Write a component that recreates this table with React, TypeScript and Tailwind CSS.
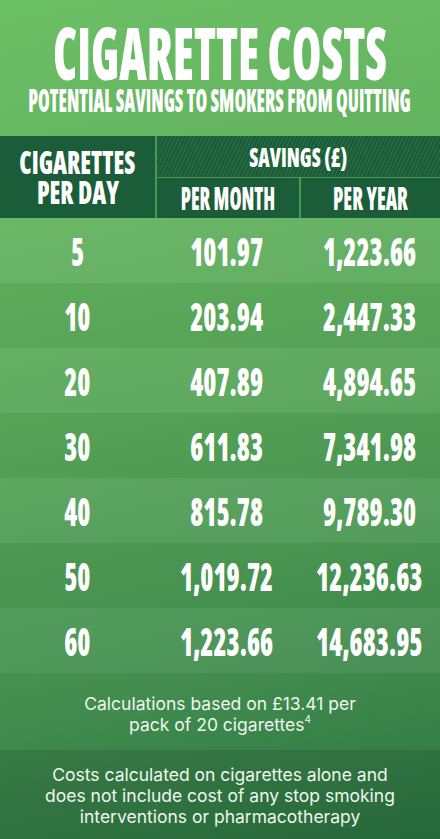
import React from "react";

const cond = "font-['Open_Sans',sans-serif] font-extrabold [font-stretch:75%] text-white whitespace-nowrap inline-block";

const rows = [
  ["5", "101.97", "1,223.66"],
  ["10", "203.94", "2,447.33"],
  ["20", "407.89", "4,894.65"],
  ["30", "611.83", "7,341.98"],
  ["40", "815.78", "9,789.30"],
  ["50", "1,019.72", "12,236.63"],
  ["60", "1,223.66", "14,683.95"],
];

export default function App() {
  return (
    <div className="w-[440px] h-[839px] overflow-hidden flex flex-col bg-[linear-gradient(168deg,#6cc065_0%,#63b25f_25%,#55a357_50%,#448f4f_75%,#2b7442_100%)]">
      {/* Title */}
      <div className="flex flex-col items-center pt-[19px] pb-[20px]">
        <div className="flex justify-center w-full h-[66px] items-center">
          <span className={`${cond} text-[73px] leading-[66px] scale-x-[0.655]`}>CIGARETTE COSTS</span>
        </div>
        <div className="flex justify-center w-full h-[31px] items-center">
          <span className={`${cond} text-[31px] leading-[31px] scale-x-[0.61]`}>POTENTIAL SAVINGS TO SMOKERS FROM QUITTING</span>
        </div>
      </div>

      {/* Header */}
      <div className="grid grid-cols-[155px_142px_minmax(0,1fr)] grid-rows-[41px_40px] gap-x-[2px] gap-y-px bg-[#4a9852] h-[82px]">
        <div className="row-span-2 min-w-0 bg-[#1b5d38] flex flex-col items-center justify-center">
          <span className={`${cond} text-[32px] leading-[30px] scale-x-[0.76]`}>CIGARETTES</span>
          <span className={`${cond} text-[32px] leading-[30px] scale-x-[0.76]`}>PER DAY</span>
        </div>
        <div className="col-span-2 min-w-0 flex items-center justify-center bg-[repeating-linear-gradient(115deg,#1b5d38_0px,#1b5d38_2.5px,#2b6e46_2.5px,#2b6e46_3.5px)]">
          <span className={`${cond} text-[27px] leading-[27px] scale-x-[0.74]`}>SAVINGS (£)</span>
        </div>
        <div className="min-w-0 bg-[#1b5d38] flex items-center justify-center">
          <span className={`${cond} text-[31px] leading-[31px] scale-x-[0.63]`}>PER MONTH</span>
        </div>
        <div className="min-w-0 bg-[#1b5d38] flex items-center justify-center">
          <span className={`${cond} text-[31px] leading-[31px] scale-x-[0.64]`}>PER YEAR</span>
        </div>
      </div>

      {/* Rows */}
      <div className="flex flex-col">
        {rows.map((r, i) => (
          <div
            key={r[0]}
            className={`grid grid-cols-[155px_144px_minmax(0,1fr)] h-[65px] items-center ${i % 2 === 0 ? "bg-white/[0.06]" : "bg-black/[0.02]"}`}
          >
            {r.map((c, j) => (
              <div key={j} className="min-w-0 flex justify-center">
                <span className={`${cond} text-[39px] leading-[39px] scale-x-[0.68]`}>{c}</span>
              </div>
            ))}
          </div>
        ))}
      </div>

      {/* Footer 1 */}
      <div className="h-[77px] pt-[20px] text-center font-['Inter',sans-serif] text-[17.5px] leading-[21px] text-[#eef6ee]">
        <p>Calculations based on £13.41 per</p>
        <p>
          pack of 20 cigarettes<sup className="text-[10px] align-super relative -top-[1px]">4</sup>
        </p>
      </div>

      {/* Footer 2 */}
      <div className="flex-1 bg-black/[0.1] pt-[14px] text-center font-['Inter',sans-serif] text-[17.5px] leading-[21px] text-[#eef6ee]">
        <p>Costs calculated on cigarettes alone and</p>
        <p>does not include cost of any stop smoking</p>
        <p>interventions or pharmacotherapy</p>
      </div>
    </div>
  );
}
